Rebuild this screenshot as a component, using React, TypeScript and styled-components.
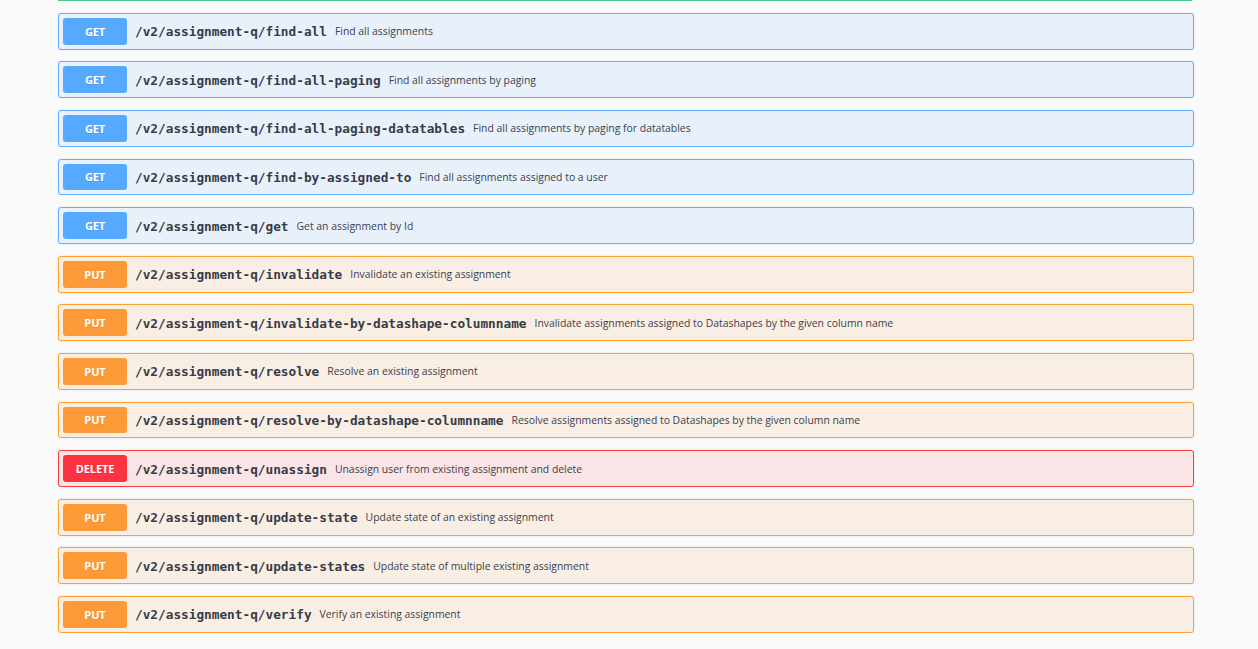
import React from "react";
import styled, { createGlobalStyle } from "styled-components";

type Method = "GET" | "PUT" | "DELETE";

const palette: Record<Method, { bg: string; border: string; badge: string }> = {
  GET: { bg: "#e8f1fa", border: "#61affe", badge: "#55a9fe" },
  PUT: { bg: "#f9eee3", border: "#fca130", badge: "#fd9a38" },
  DELETE: { bg: "#f9e5e5", border: "#f93e3e", badge: "#fb3441" },
};

const endpoints: { method: Method; path: string; summary: string }[] = [
  { method: "GET", path: "/v2/assignment-q/find-all", summary: "Find all assignments" },
  { method: "GET", path: "/v2/assignment-q/find-all-paging", summary: "Find all assignments by paging" },
  { method: "GET", path: "/v2/assignment-q/find-all-paging-datatables", summary: "Find all assignments by paging for datatables" },
  { method: "GET", path: "/v2/assignment-q/find-by-assigned-to", summary: "Find all assignments assigned to a user" },
  { method: "GET", path: "/v2/assignment-q/get", summary: "Get an assignment by Id" },
  { method: "PUT", path: "/v2/assignment-q/invalidate", summary: "Invalidate an existing assignment" },
  { method: "PUT", path: "/v2/assignment-q/invalidate-by-datashape-columnname", summary: "Invalidate assignments assigned to Datashapes by the given column name" },
  { method: "PUT", path: "/v2/assignment-q/resolve", summary: "Resolve an existing assignment" },
  { method: "PUT", path: "/v2/assignment-q/resolve-by-datashape-columnname", summary: "Resolve assignments assigned to Datashapes by the given column name" },
  { method: "DELETE", path: "/v2/assignment-q/unassign", summary: "Unassign user from existing assignment and delete" },
  { method: "PUT", path: "/v2/assignment-q/update-state", summary: "Update state of an existing assignment" },
  { method: "PUT", path: "/v2/assignment-q/update-states", summary: "Update state of multiple existing assignment" },
  { method: "PUT", path: "/v2/assignment-q/verify", summary: "Verify an existing assignment" },
];

const GlobalStyle = createGlobalStyle`
  html, body {
    margin: 0;
    padding: 0;
    background: #fafafa;
    font-family: "Open Sans", "Liberation Sans", sans-serif;
  }
`;

const Page = styled.div`
  width: 1136px;
  padding-left: 58px;
  display: flex;
  flex-direction: column;
  gap: 11.8px;
`;

const PrevBlockEdge = styled.div`
  width: 1134px;
  height: 0;
  border-bottom: 1.3px solid #49cc90;
`;

const Operation = styled.div<{ $method: Method }>`
  display: flex;
  align-items: center;
  box-sizing: border-box;
  height: 36.8px;
  padding: 0 4px;
  border: 1px solid ${(p) => palette[p.$method].border};
  border-radius: 3px;
  background: ${(p) => palette[p.$method].bg};
  box-shadow: 0 0 2px rgba(0, 0, 0, 0.12);
`;

const Badge = styled.span<{ $method: Method }>`
  display: flex;
  align-items: center;
  justify-content: center;
  width: 64px;
  height: 26.8px;
  flex-shrink: 0;
  border-radius: 3px;
  background: ${(p) => palette[p.$method].badge};
  color: #fff;
  font-size: 11px;
  font-weight: 700;
  letter-spacing: -0.1px;
  text-shadow: 0 1px 0 rgba(0, 0, 0, 0.1);
`;

const Path = styled.span`
  margin-left: 8px;
  padding-top: 1px;
  font-family: "DejaVu Sans Mono", "Liberation Mono", monospace;
  font-size: 12.75px;
  font-weight: 700;
  color: #363b48;
`;

const Summary = styled.span`
  margin-left: 8px;
  font-size: 10.4px;
  color: #3b4151;
`;

export default function App() {
  return (
    <>
      <GlobalStyle />
      <Page>
        <PrevBlockEdge />
        {endpoints.map((e) => (
          <Operation key={e.path} $method={e.method}>
            <Badge $method={e.method}>{e.method}</Badge>
            <Path>{e.path}</Path>
            <Summary>{e.summary}</Summary>
          </Operation>
        ))}
      </Page>
    </>
  );
}
